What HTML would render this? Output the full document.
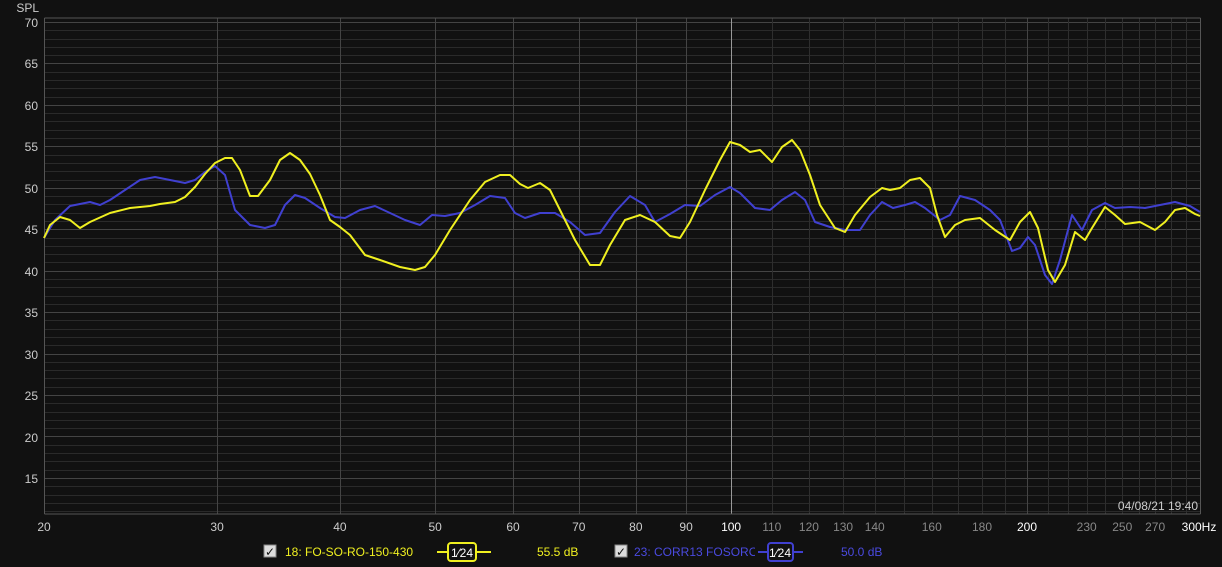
<!DOCTYPE html>
<html><head><meta charset="utf-8"><style>
body{margin:0;background:#111;width:1222px;height:567px;overflow:hidden;font-family:"Liberation Sans",sans-serif}
</style></head><body>
<svg width="1222" height="567" xmlns="http://www.w3.org/2000/svg" style="position:absolute;left:0;top:0">
<defs><clipPath id="c1"><rect x="630" y="540" width="125" height="25"/></clipPath></defs>
<rect width="1222" height="567" fill="#111"/>
<g id="grid"></g>
<g font-family="Liberation Sans, sans-serif" font-size="12" fill="#ccc" text-anchor="end">
<text x="39" y="12">SPL</text>
<text x="38" y="27">70</text><text x="38" y="68">65</text><text x="38" y="110">60</text><text x="38" y="151">55</text><text x="38" y="193">50</text><text x="38" y="234">45</text><text x="38" y="276">40</text><text x="38" y="317">35</text><text x="38" y="359">30</text><text x="38" y="400">25</text><text x="38" y="442">20</text><text x="38" y="483">15</text>
</g>
<g font-family="Liberation Sans, sans-serif" font-size="12" text-anchor="middle" id="xl"></g>
<text x="1198" y="510" font-family="Liberation Sans, sans-serif" font-size="12" fill="#ccc" text-anchor="end">04/08/21 19:40</text>
<polyline fill="none" stroke="#4040d0" stroke-width="2" stroke-linejoin="round" points="44,238 55,220 70,206 90,202 100,205 110,200 125,190 140,180 155,177 170,180 185,183 195,180 205,172 215,166 225,175 235,210 250,225 265,228 275,225 285,205 295,195 305,198 320,208 335,217 345,218 360,210 375,206 390,213 405,220 420,225 432,215 445,216 460,213 475,205 490,196 505,198 515,213 525,218 540,213 555,213 570,222 585,235 600,233 615,212 630,196 645,205 655,222 670,214 685,205 700,206 715,195 730,187 740,193 755,208 770,210 782,200 795,192 805,200 815,222 830,227 845,230 860,230 870,215 882,202 893,208 905,205 915,202 925,208 940,220 950,215 960,196 975,200 990,210 1000,220 1012,251 1020,248 1028,237 1035,245 1045,275 1052,284 1060,260 1072,215 1082,230 1092,210 1105,203 1115,208 1130,207 1145,208 1160,205 1175,202 1190,206 1200,212"/>
<polyline fill="none" stroke="#f0f020" stroke-width="2" stroke-linejoin="round" points="44,238 50,225 60,217 70,220 80,228 90,222 110,213 130,208 150,206 160,204 175,202 185,197 195,187 205,174 215,163 225,158 232,158 240,170 250,196 258,196 270,180 280,160 290,153 300,160 310,174 320,195 330,220 340,227 350,235 365,255 380,260 400,267 415,270 425,267 435,255 450,230 470,200 485,182 500,175 510,175 520,184 528,188 540,183 550,190 560,210 575,240 590,265 600,265 610,245 625,220 640,215 655,222 670,236 680,238 690,222 705,190 720,160 730,142 740,145 750,152 760,150 772,162 782,147 792,140 800,150 810,175 820,205 835,228 845,232 855,215 870,197 882,188 890,190 900,188 910,180 920,178 930,188 937,215 945,237 955,225 965,220 980,218 995,230 1010,240 1020,222 1030,212 1038,228 1048,270 1055,282 1065,265 1075,232 1085,240 1092,228 1105,207 1115,215 1125,224 1140,222 1155,230 1165,222 1175,210 1185,208 1195,214 1200,216"/>
<!-- legend -->
<rect x="264" y="545" width="12" height="12" fill="#ddd" stroke="#888"/><text x="270" y="556" font-size="12" text-anchor="middle" fill="#111">✓</text>
<text x="285" y="556" font-family="Liberation Sans, sans-serif" font-size="12" fill="#f0f020">18: FO-SO-RO-150-430</text>
<line x1="437" y1="552" x2="491" y2="552" stroke="#f0f020" stroke-width="2"/>
<rect x="448" y="543" width="28" height="18" rx="3" fill="#111" stroke="#f0f020" stroke-width="2"/>
<text x="462" y="557" font-family="Liberation Sans, sans-serif" font-size="12" fill="#fff" text-anchor="middle">1⁄24</text>
<text x="537" y="556" font-family="Liberation Sans, sans-serif" font-size="12" fill="#f0f020">55.5 dB</text>
<rect x="615" y="545" width="12" height="12" fill="#ddd" stroke="#888"/><text x="621" y="556" font-size="12" text-anchor="middle" fill="#111">✓</text>
<text x="634" y="556" font-family="Liberation Sans, sans-serif" font-size="12" fill="#4a4ae0" clip-path="url(#c1)">23: CORR13 FOSOROSTU</text>
<line x1="758" y1="552" x2="803" y2="552" stroke="#4040d0" stroke-width="2"/>
<rect x="768" y="543" width="25" height="18" rx="3" fill="#111" stroke="#4040d0" stroke-width="2"/>
<text x="780" y="557" font-family="Liberation Sans, sans-serif" font-size="12" fill="#fff" text-anchor="middle">1⁄24</text>
<text x="841" y="556" font-family="Liberation Sans, sans-serif" font-size="12" fill="#4a4ae0">50.0 dB</text>
</svg>
<script>
const ns="http://www.w3.org/2000/svg";
const g=document.getElementById('grid'),xl=document.getElementById('xl');
function L(x1,y1,x2,y2,c){const l=document.createElementNS(ns,'line');l.setAttribute('x1',x1);l.setAttribute('y1',y1);l.setAttribute('x2',x2);l.setAttribute('y2',y2);l.setAttribute('stroke',c);l.setAttribute('stroke-width',1);g.appendChild(l);}
const T=18,B=514,Lx=44.5,R=1200.5;
function y(d){return 22+(70-d)*8.29;}
for(let d=11;d<=70;d++){const yy=Math.round(y(d))+.5;L(Lx,yy,R,yy,d%5==0?'#444':'#2a2a2a');}
function X(f){return 44+983*Math.log10(f/20);}
for(let f=110;f<300;f+=10){if(f==200)continue;const x=Math.round(X(f))+.5;L(x,T,x,B,'#2e2e2e');}
[30,40,50,60,70,80,90,200].forEach(f=>{const x=Math.round(X(f))+.5;L(x,T,x,B,'#444');});
L(Math.round(X(100))+.5,T,Math.round(X(100))+.5,B,'#999');
L(Lx,T,R,T,'#555');L(Lx,B,R,B,'#555');L(Lx,T,Lx,B,'#555');L(R,T,R,B,'#555');
const labs=[[20,1],[30,1],[40,1],[50,1],[60,1],[70,1],[80,1],[90,1],[100,2],[110,0],[120,0],[130,0],[140,0],[160,0],[180,0],[200,2],[230,0],[250,0],[270,0]];
labs.forEach(([f,m])=>{const t=document.createElementNS(ns,'text');t.setAttribute('x',X(f));t.setAttribute('y',531);t.setAttribute('fill',m==2?'#fff':m==1?'#ccc':'#888');t.textContent=f;xl.appendChild(t);});
const t=document.createElementNS(ns,'text');t.setAttribute('x',1199);t.setAttribute('y',531);t.setAttribute('fill','#fff');t.textContent='300Hz';xl.appendChild(t);
</script>
</body></html>
